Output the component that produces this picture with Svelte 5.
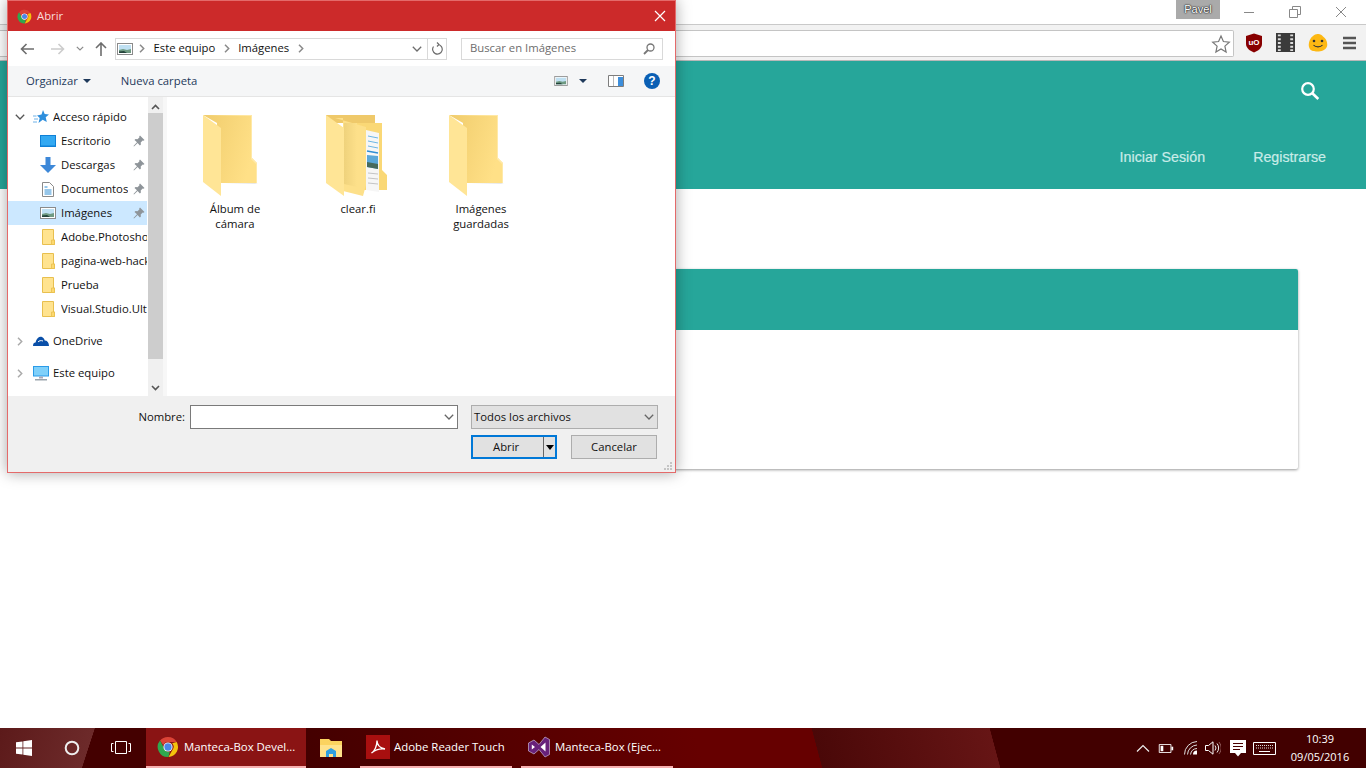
<script>
  const files = [
    { lines: ['Álbum de', 'cámara'], kind: 'plain' },
    { lines: ['clear.fi'], kind: 'docs' },
    { lines: ['Imágenes', 'guardadas'], kind: 'plain' }
  ];
  const pinned = [
    { name: 'Escritorio', icon: 'desktop' },
    { name: 'Descargas', icon: 'down' },
    { name: 'Documentos', icon: 'doc' },
    { name: 'Imágenes', icon: 'pic', selected: true }
  ];
  const folders = ['Adobe.Photoshop.CC', 'pagina-web-hackaton', 'Prueba', 'Visual.Studio.Ultimate'];
</script>

{#snippet chrome(size)}
  <svg width={size} height={size} viewBox="0 0 24 24">
    <path d="M12 1a11 11 0 0 1 9.5 5.5H12a5.5 5.5 0 0 0-5.2 3.700L3.300 5A11 11 0 0 1 12 1z" fill="#db4437" />
    <path d="M21.500 6.500A11 11 0 0 1 12.500 23l4.300-7.700A5.500 5.500 0 0 0 16.500 8z" fill="#f4c20d" />
    <path d="M12.500 23A11 11 0 0 1 3.300 5l4.400 8a5.500 5.500 0 0 0 6.300 3.900z" fill="#2fa84f" />
    <circle cx="12" cy="12" r="5" fill="#fff" />
    <circle cx="12" cy="12" r="4" fill="#4a86e8" />
  </svg>
{/snippet}

{#snippet pic(w, h)}
  <svg width={w} height={h} viewBox="0 0 16 12">
    <rect x=".5" y=".5" width="15" height="11" fill="#fff" stroke="#8a8a8a" />
    <rect x="2" y="2" width="12" height="8" fill="#bfe0f2" />
    <path d="M2 7l4-1 4 1 4-1v4H2z" fill="#6f9a82" />
    <path d="M2 8.500l5-.5 3 2H2z" fill="#24433a" />
  </svg>
{/snippet}

{#snippet smallFolder()}
  <svg class="mini" width="13" height="16" viewBox="0 0 13 16">
    <path d="M.5.500h11v10.500h1v4.500H.5z" fill="#ffe38f" stroke="#e8bf4e" />
    <path d="M9.500 11h3v4.500h-3z" fill="#fdd96f" stroke="#e8bf4e" stroke-width=".8" />
  </svg>
{/snippet}

{#snippet pinIcon()}
  <svg class="pin" width="12" height="12" viewBox="0 0 12 12">
    <path d="M7 .5l4.500 4.500-1 .8-.8-.3-2 2 .2 2-1 1-2.300-2.500L1 11.500l-.5-.5 3.500-3.700L1.500 5l1-1 2 .2 2-2-.3-.8z" fill="#8e9499" />
  </svg>
{/snippet}

{#snippet chevDown(c)}
  <svg width="10" height="6" viewBox="0 0 10 6"><path d="M.8.800L5 5l4.200-4.200" fill="none" stroke={c} stroke-width="1.300" /></svg>
{/snippet}

{#snippet chevRight(c)}
  <svg width="6" height="9" viewBox="0 0 6 9"><path d="M1 .8l3.700 3.700L1 8.200" fill="none" stroke={c} stroke-width="1.500" /></svg>
{/snippet}

{#snippet plainFolder()}
  <svg class="fplain" width="56" height="82" viewBox="0 0 56 82">
    <defs>
      <linearGradient id="fb" x1="0" y1="0" x2="1" y2=".35">
        <stop offset="0" stop-color="#f0cc6c" /><stop offset="1" stop-color="#ffe087" />
      </linearGradient>
    </defs>
    <path d="M52 68h3l-3 1H20z" fill="#e8e8e8" />
    <path d="M0 0h49v43l5 5v20H14V8z" fill="url(#fb)" />
    <path d="M49 0v43l5 5v20h-1V49l-5-5V1H3z" fill="#ffe9a8" />
    <path d="M0 0l18 13v68L0 67z" fill="#ffe596" />
  </svg>
{/snippet}

{#snippet docFolder()}
  <svg class="fdocs" width="62" height="82" viewBox="0 0 62 82">
    <defs>
      <linearGradient id="fband" x1="0" y1="0" x2="1" y2="0">
        <stop offset="0" stop-color="#efd27c" /><stop offset="1" stop-color="#fde08a" />
      </linearGradient>
    </defs>
    <path d="M0 0h49v8H0z" fill="#efc96a" />
    <path d="M20 8h36v47l5 5v15H20z" fill="#fad876" />
    <path d="M40 15l13 3v59l-13-2z" fill="#f6f6f6" />
    <path d="M42 21l10 2M42 26l10 2M42 31l10 2" stroke="#6eb6e4" />
    <path d="M41 36l11 2" stroke="#2f8ed4" stroke-width="1.500" />
    <path d="M41 40l11 1v13l-11-2z" fill="#5aa7d8" />
    <path d="M41 47l11 2v5l-11-2z" fill="#476a5c" />
    <path d="M42 58l10 1M42 63l10 1M42 68l10 1" stroke="#c4c4c4" />
    <path d="M9 3l31 9v58l-3 11-20-5V3z" fill="#fde08a" />
    <path d="M18 8h13v64l-13-3z" fill="url(#fband)" />
    <path d="M0 0l18 13v68L0 68z" fill="#ffe596" />
  </svg>
{/snippet}

<div class="screen">
  <div class="page">
    <div class="strip">
      <span class="user">Pavel</span>
      <div class="winctl">
        <svg width="12" height="12" viewBox="0 0 12 12"><path d="M1 6.500h10" stroke="#888" /></svg>
        <svg width="12" height="12" viewBox="0 0 12 12"><path d="M.5 3.500h8v8h-8zM3.500 3.500v-3h8v8h-3" fill="none" stroke="#888" /></svg>
        <svg width="12" height="12" viewBox="0 0 12 12"><path d="M1 1l10 10M11 1L1 11" stroke="#888" stroke-width="1" /></svg>
      </div>
    </div>
    <div class="toolbar">
      <div class="url">
        <svg width="20" height="20" viewBox="0 0 20 20"><path d="M10 2l2.400 5.500 5.900.6-4.400 4 1.200 5.900L10 15l-5.100 3 1.200-5.900-4.400-4 5.900-.6z" fill="#fff" stroke="#777" stroke-width="1.200" /></svg>
      </div>
      <div class="ext">
        <svg class="e1" width="18" height="20" viewBox="0 0 18 20"><path d="M9 .5l8 2.500v8c0 4-4 7-8 8.500-4-1.500-8-4.500-8-8.500V3z" fill="#800" /><text x="9" y="11.500" class="ub">uO</text></svg>
        <svg class="e2" width="19" height="19" viewBox="0 0 20 20"><rect width="20" height="20" fill="#3b3b3b" /><path d="M2 2.500h3M2 6.500h3M2 10.500h3M2 14.500h3M2 18h3M15 2.500h3M15 6.500h3M15 10.500h3M15 14.500h3M15 18h3" stroke="#ddd" stroke-width="2" /></svg>
        <svg class="e3" width="20" height="18" viewBox="0 0 20 18"><path d="M5 2c3-3 8-2.500 10 .5 3 2 5 6 4 10-1.500 4-6 5-9.500 5S2 17 1 13C0 9 2 4 5 2z" fill="#fdb813" /><circle cx="6" cy="7" r="1.300" fill="#333" /><circle cx="14" cy="7" r="1.300" fill="#333" /><path d="M5.500 11c2 2.500 7 2.500 9 0" fill="none" stroke="#333" stroke-width="1.200" /></svg>
        <svg class="e4" width="13" height="14" viewBox="0 0 14 14" preserveAspectRatio="none"><path d="M0 2h14M0 7h14M0 12h14" stroke="#555" stroke-width="2.600" /></svg>
      </div>
    </div>
    <header class="site">
      <svg class="search" width="20" height="20" viewBox="0 0 20 20"><circle cx="8" cy="8" r="5.800" fill="none" stroke="#fff" stroke-width="2.200" /><path d="M12.300 12.300l6 5.700" stroke="#fff" stroke-width="2.600" /></svg>
      <nav class="links"><span>Iniciar Sesión</span><span>Registrarse</span></nav>
    </header>
    <section class="card"><div class="cardhead"></div></section>
  </div>

  <div class="taskbar">
    <div class="tb-sys">
      <svg width="16" height="16" viewBox="0 0 16 16"><path d="M0 2.300l6.500-.9v6.200H0zM7.300 1.300L16 0v7.600H7.300zM0 8.400h6.500v6.200L0 13.700zM7.300 8.400H16V16l-8.700-1.200z" fill="#fff" /></svg>
    </div>
    <div class="tb-sys">
      <svg width="16" height="16" viewBox="0 0 16 16"><circle cx="8" cy="8" r="6.300" fill="none" stroke="#eee" stroke-width="2" /></svg>
    </div>
    <div class="tb-sys">
      <svg width="20" height="14" viewBox="0 0 20 14"><path d="M4.500.5h11v12h-11zM2.500 2.500H.5v8h2M17.500 2.500h2v8h-2" fill="none" stroke="#fff" /></svg>
    </div>
    <div class="app active">
      {@render chrome(22)}
      <span>Manteca-Box Devel...</span>
    </div>
    <div class="app folderapp">
      <svg width="22" height="18" viewBox="0 0 22 18"><path d="M0 0h9l2 2h11v16H0z" fill="#fbd35f" /><path d="M0 6h22v12H0z" fill="#ffe28a" /><path d="M6 18v-6l5-3 5 3v6h-3v-3H9v3z" fill="#2f9fe0" /></svg>
    </div>
    <div class="app running">
      <svg width="24" height="24" viewBox="0 0 24 24"><rect width="24" height="24" fill="#a80f0f" /><path d="M5.500 18c3-1.500 5.500-7 5.500-12.500 0 4 3 7.500 8 8.500-5-.5-9.500.5-13.500 4z" fill="none" stroke="#fff" stroke-width="1.300" /></svg>
      <span>Adobe Reader Touch</span>
    </div>
    <div class="app running vs">
      <svg width="24" height="24" viewBox="0 0 24 24"><path d="M1.500 8L7 5l5 4.500L18 2l4.500 2.500v15L18 22l-6-7.500L7 19l-5.500-3z" fill="#68217a" stroke="#c9b6d6" stroke-width=".7" /><path d="M4.800 9.500L8 12l-3.200 2.500zM13.500 12L18.500 7.500v9z" fill="#fff" /></svg>
      <span>Manteca-Box (Ejec...</span>
    </div>
    <div class="tray">
      <svg width="14" height="8" viewBox="0 0 14 8"><path d="M1 7.500L7 1.500l6 6" fill="none" stroke="#eee" stroke-width="1.200" /></svg>
      <svg width="16" height="9" viewBox="0 0 16 10"><path d="M.5.500h13v9H.5z" fill="none" stroke="#fff" /><path d="M2 2h3v6H2z" fill="#fff" /><path d="M14 3h2v4h-2z" fill="#fff" /></svg>
      <svg width="14" height="14" viewBox="0 0 14 14"><path d="M.5 13.500A13 13 0 0 1 13 .5M3.500 13.500A10 10 0 0 1 13 4M6.500 13.500A7 7 0 0 1 13 7.500" fill="none" stroke="#ddd" /><path d="M9 13.500a4 4 0 0 1 4-4v4z" fill="#fff" /></svg>
      <svg width="16" height="14" viewBox="0 0 16 14"><path d="M.5 4.500h3L8 .8v12.400L3.500 9.500h-3z" fill="none" stroke="#fff" /><path d="M10 4.500a4 4 0 0 1 0 5M12 2.500a7 7 0 0 1 0 9" fill="none" stroke="#eee" /><path d="M14 1a10 10 0 0 1 0 12" fill="none" stroke="#8f5a5a" /></svg>
      <svg width="16" height="17" viewBox="0 0 16 17"><path d="M0 0h16v13h-5l-3 3.500L5 13H0z" fill="#fff" /><path d="M3 3.500h10M3 6.500h10M3 9.500h7" stroke="#4a0000" /></svg>
      <svg width="23" height="13" viewBox="0 0 23 13"><path d="M.5.500h22v12H.5z" fill="none" stroke="#fff" /><path d="M3 3.500h17M3 6h17" stroke="#ddd" stroke-dasharray="1 1" /><path d="M6 9.500h11" stroke="#fff" /></svg>
      <div class="clock"><span>10:39</span><span>09/05/2016</span></div>
    </div>
  </div>

  <div class="dialog">
    <div class="titlebar">
      {@render chrome(15)}
      <span class="title">Abrir</span>
      <svg class="close" width="12" height="12" viewBox="0 0 12 12"><path d="M1 1l10 10M11 1L1 11" stroke="#fff" stroke-width="1.200" /></svg>
    </div>

    <div class="navbar">
      <div class="arrows">
        <svg width="14" height="12" viewBox="0 0 14 12"><path d="M6.500 1L1.500 6l5 5M1.500 6H14" fill="none" stroke="#6d6d6d" stroke-width="1.600" /></svg>
        <svg class="far" width="14" height="12" viewBox="0 0 14 12"><path d="M7.500 1l5 5-5 5M12.500 6H0" fill="none" stroke="#ccc" stroke-width="1.600" /></svg>
        <svg class="tiny" width="8" height="5" viewBox="0 0 8 5"><path d="M.8.800L4 4l3.200-3.200" fill="none" stroke="#8a8a8a" stroke-width="1.200" /></svg>
        <svg class="up" width="12" height="14" viewBox="0 0 12 14"><path d="M1 6l5-5 5 5M6 1v13" fill="none" stroke="#6d6d6d" stroke-width="1.600" /></svg>
      </div>
      <div class="address">
        <span class="addr-pic">{@render pic(16, 12)}</span>
        {@render chevRight('#8a8a8a')}
        <span class="t">Este equipo</span>
        {@render chevRight('#8a8a8a')}
        <span class="t">Imágenes</span>
        {@render chevRight('#8a8a8a')}
        <div class="addr-end">
          {@render chevDown('#6d6d6d')}
          <div class="refresh">
            <svg width="12" height="13" viewBox="0 0 12 13"><path d="M7 2.500A4.800 4.800 0 1 1 2.500 4.500M6 .5l2 2-2 2" fill="none" stroke="#6d6d6d" stroke-width="1.200" /></svg>
          </div>
        </div>
      </div>
      <div class="searchbox">
        <span class="t">Buscar en Imágenes</span>
        <svg width="12" height="12" viewBox="0 0 12 12"><circle cx="7.500" cy="4.500" r="3.500" fill="none" stroke="#777" stroke-width="1.300" /><path d="M5 7L1 11" stroke="#777" stroke-width="1.800" /></svg>
      </div>
    </div>

    <div class="cmdbar">
      <span class="t">Organizar</span>
      <i class="caret org"></i>
      <span class="t new">Nueva carpeta</span>
      <div class="cmd-right">
        {@render pic(14, 10)}
        <i class="caret"></i>
        <svg class="pane" width="16" height="12" viewBox="0 0 16 12"><path d="M.5.500h15v11H.5z" fill="#fff" stroke="#7d7d7d" /><path d="M5.500 1v10" stroke="#bbb" /><path d="M10 2h5v9h-5z" fill="#3d8edb" /></svg>
        <svg class="help" width="16" height="16" viewBox="0 0 16 16"><circle cx="8" cy="8" r="8" fill="#0a5fb4" /><text x="8" y="12.300" class="q">?</text></svg>
      </div>
    </div>

    <div class="body">
      <div class="tree">
        <div class="row top">
          <span class="exp">{@render chevDown('#555')}</span>
          <svg width="16" height="14" viewBox="0 0 16 14"><path d="M10 0l1.700 4 4.300.4-3.300 2.900 1.100 4.700L9.700 9.700 5.500 13l1.200-4.900L4 5.500l4.500-1z" fill="#2e8fdd" /><path d="M0 6h3.500M1 9h4M0 12h4" stroke="#6fb2e8" /></svg>
          <span class="label">Acceso rápido</span>
        </div>
        {#each pinned as item}
          <div class="row child" class:selected={item.selected}>
            {#if item.icon === 'desktop'}
              <svg width="16" height="12" viewBox="0 0 16 12"><rect width="16" height="12" fill="#0f80d6" /><rect x="1" y="1" width="14" height="9.500" fill="#33a9f2" /></svg>
            {:else if item.icon === 'down'}
              <svg width="16" height="16" viewBox="0 0 16 16"><path d="M5.500 0h5v8H16l-8 8-8-8h5.500z" fill="#3d88d8" /></svg>
            {:else if item.icon === 'doc'}
              <svg width="16" height="15" viewBox="-2 0 16 15"><path d="M.5.500h7l4 4v10H.5z" fill="#fff" stroke="#8a8a8a" /><path d="M2.500 5h3M2.500 8h7M2.500 10h7M2.500 12h7" stroke="#2f8ed4" /></svg>
            {:else}
              {@render pic(16, 12)}
            {/if}
            <span class="label">{item.name}</span>
            {@render pinIcon()}
          </div>
        {/each}
        {#each folders as name}
          <div class="row child folder">
            {@render smallFolder()}
            <span class="label">{name}</span>
          </div>
        {/each}
        <div class="row top gapped">
          <span class="exp">{@render chevRight('#aaa')}</span>
          <svg width="16" height="10" viewBox="0 0 16 10"><path d="M0 10c0-2.500 1-3.500 2.500-3.500C3.500 2 6.500 0 9 1c1.500.7 2.500 2 2.700 3.500 2.500 0 4.300 2 4.300 5.500z" fill="#0a4fa8" /><path d="M5 6c1-1.300 3-1.800 5-1" fill="none" stroke="#fff" /></svg>
          <span class="label">OneDrive</span>
        </div>
        <div class="row top gapped">
          <span class="exp">{@render chevRight('#aaa')}</span>
          <svg width="16" height="15" viewBox="0 0 16 15"><rect width="16" height="10.500" fill="#2a9be8" /><rect x="1" y="1" width="14" height="8.500" fill="#7fd0fa" /><path d="M6 10.500h4v2H6z" fill="#aab" /><path d="M2 13h12v1.500H2z" fill="#9aa4ad" /></svg>
          <span class="label">Este equipo</span>
        </div>
      </div>
      <div class="scroll">
        <svg class="sb-up" width="9" height="6" viewBox="0 0 9 6"><path d="M1 5l3.500-3.500L8 5" fill="none" stroke="#555" stroke-width="1.600" /></svg>
        <div class="thumb"></div>
        <svg class="sb-down" width="9" height="6" viewBox="0 0 9 6"><path d="M1 1l3.500 3.500L8 1" fill="none" stroke="#555" stroke-width="1.600" /></svg>
      </div>
      <div class="files">
        {#each files as file}
          <div class="file">
            {#if file.kind === 'docs'}
              {@render docFolder()}
            {:else}
              {@render plainFolder()}
            {/if}
            <div class="fname">
              {#each file.lines as line}<div>{line}</div>{/each}
            </div>
          </div>
        {/each}
      </div>
    </div>

    <div class="footer">
      <div class="frow">
        <span class="nlabel t">Nombre:</span>
        <div class="input">{@render chevDown('#666')}</div>
        <div class="select"><span class="t">Todos los archivos</span>{@render chevDown('#666')}</div>
      </div>
      <div class="frow btns">
        <div class="btn primary">
          <span class="t">Abrir</span>
          <i class="split"></i>
          <i class="blackcaret"></i>
        </div>
        <div class="btn"><span class="t">Cancelar</span></div>
      </div>
      <svg class="grip" width="10" height="10" viewBox="0 0 10 10"><path d="M7 1h2v2H7zM4 4h2v2H4zM7 4h2v2H7zM1 7h2v2H1zM4 7h2v2H4zM7 7h2v2H7z" fill="#c4c4c4" /></svg>
    </div>
  </div>
</div>

<style>
  :global(body) { margin: 0; background: #fff; }
  .screen {
    position: relative;
    width: 1366px;
    height: 768px;
    overflow: hidden;
    display: flex;
    flex-direction: column;
    font-family: "Open Sans", "Noto Sans", sans-serif;
    font-size: 11.3px;
    color: #111;
    background: #fff;
  }
  svg { display: block; flex: none; }
  .t { padding-bottom: 2px; }

  .page { flex: 1; min-height: 0; display: flex; flex-direction: column; }
  .strip { height: 24px; display: flex; justify-content: flex-end; align-items: flex-start; background: #fff; }
  .user {
    width: 44px; height: 19px; background: #aaa; color: #fff; text-align: center;
    font: 11px/18px "Liberation Sans", sans-serif; text-shadow: 0 0 2px #000, 0 0 1px #000; margin-right: 23px;
  }
  .winctl { display: flex; gap: 34px; padding: 6px 19px 0 0; }
  .toolbar {
    height: 35px; border-top: 1px solid #c9c9c9; border-bottom: 1px solid #b8b8b8;
    background: #f2f2f2; display: flex; align-items: center;
  }
  .url {
    flex: 1; height: 25px; background: #fff; border: 1px solid #c4c4c4; border-left: 0; border-radius: 0 2px 2px 0;
    display: flex; justify-content: flex-end; align-items: center; padding-right: 2px; margin-top: 2px;
  }
  .ext { display: flex; align-items: center; padding: 0 10px 0 11px; }
  .e2 { margin-left: 13px; }
  .e3 { margin-left: 13px; }
  .e4 { margin-left: 15px; }
  .ub { font: bold 8px "Liberation Sans", sans-serif; fill: #fff; text-anchor: middle; }
  .site {
    height: 128px; box-sizing: border-box; background: #26a69a; display: flex; flex-direction: column;
    align-items: flex-end; padding: 20px 40px 0 0;
  }
  .search { margin: 0 6px 0 0; }
  .links {
    display: flex; gap: 48px; margin-top: 46px; font: 14.25px/20px "Liberation Sans", sans-serif;
    color: #c9ece8; -webkit-text-stroke: .2px #c9ece8;
  }
  .card {
    margin: 80px 68px 0; height: 200px; background: #fff; border-radius: 2px;
    box-shadow: 0 1px 3px rgba(0,0,0,.4);
  }
  .cardhead { height: 61px; background: #26a69a; border-radius: 2px 2px 0 0; }

  .taskbar {
    height: 40px; flex: none; display: flex; align-items: stretch; color: #fff;
    background:
      linear-gradient(108deg, #5c1a1a 0, #6d2a2a 90px, transparent 90.5px),
      linear-gradient(75deg, #440000 300px, #660000 680px, #660000 794px, #4a0808 794.5px, #661515 966px, #420000 966.5px, #420000 100%);
    font-size: 11.4px;
  }
  .tb-sys { width: 48px; display: flex; align-items: center; justify-content: center; }
  .tb-sys:nth-child(3) { width: 50px; }
  .app { display: flex; align-items: center; gap: 4px; box-sizing: border-box; white-space: nowrap; }
  .app span { padding-bottom: 2px; }
  .app.active { width: 160px; gap: 5px; padding-left: 11px; background: #8a1414; border-bottom: 2px solid #f7b0b0; }
  .app.folderapp { width: 54px; padding-left: 14px; }
  .app.running { width: 152px; border-bottom: 2px solid #f7b0b0; padding-left: 6px; }
  .app.vs { margin-left: 9px; }
  .tray { margin-left: auto; display: flex; align-items: center; padding-right: 16px; }
  .tray svg:nth-child(1) { margin-right: 8px; }
  .tray svg:nth-child(2) { margin-right: 10px; }
  .tray svg:nth-child(3) { margin-right: 7px; }
  .tray svg:nth-child(4) { margin-right: 9px; }
  .tray svg:nth-child(5) { margin-right: 7px; }
  .clock { display: flex; flex-direction: column; align-items: center; line-height: 18px; margin-left: 14px; width: 60px; white-space: nowrap; font-size: 11px; }

  .dialog {
    position: absolute; left: 7px; top: 0; width: 667px; height: 471px;
    border: 1px solid #e46a6a; background: #fff; display: flex; flex-direction: column;
    box-shadow: 0 0 14px rgba(0,0,0,.35);
  }
  .titlebar {
    height: 30px; flex: none; background: #cc2a2a; display: flex; align-items: center; padding-left: 9px; color: #fff;
  }
  .title { margin-left: 5px; flex: 1; color: #f8dcdc; padding-bottom: 2px; }
  .close { margin-right: 9px; }

  .navbar { height: 35px; flex: none; display: flex; align-items: center; }
  .arrows { width: 107px; display: flex; align-items: center; padding-left: 12px; box-sizing: border-box; }
  .far { margin-left: 17px; }
  .tiny { margin-left: 11px; }
  .up { margin-left: 11px; }
  .address {
    width: 329px; height: 20px; border: 1px solid #d9d9d9; display: flex; align-items: center; gap: 8.5px; padding-left: 1px;
    color: #111;
  }
  .addr-pic { margin-right: -2.500px; }
  .addr-end { margin-left: auto; display: flex; align-items: center; gap: 5px; height: 100%; }
  .refresh { width: 18px; height: 100%; border-left: 1px solid #d9d9d9; display: flex; align-items: center; justify-content: center; }
  .searchbox {
    margin-left: 14px; width: 185px; height: 20px; border: 1px solid #d9d9d9; display: flex; align-items: center;
    justify-content: space-between; padding: 0 7px 0 8px; color: #6d6d6d;
  }

  .cmdbar {
    height: 30px; flex: none; background: #f5f6f7; border-bottom: 1px solid #e5e5e5;
    display: flex; align-items: center; padding-left: 18px; color: #1e395b;
  }
  .caret { width: 0; height: 0; border: 4px solid transparent; border-top: 4px solid #1e395b; border-bottom: 0; display: block; }
  .org { margin-left: 5px; }
  .new { margin-left: 30px; }
  .cmd-right { margin-left: auto; display: flex; align-items: center; padding-right: 15px; }
  .cmd-right .caret { margin-left: 11px; }
  .pane { margin-left: 21px; }
  .help { margin-left: 20px; }
  .q { font: bold 12px "Liberation Sans", sans-serif; fill: #fff; text-anchor: middle; }

  .body { height: 299px; flex: none; display: flex; background: #fff; }
  .tree { width: 140px; flex: none; overflow: hidden; padding-top: 8px; box-sizing: border-box; }
  .row { height: 24px; margin-right: 1px; display: flex; align-items: center; white-space: nowrap; overflow: hidden; }
  .row.child { padding-left: 32px; gap: 5px; }
  .row.folder { padding-left: 34px; gap: 6px; }
  .row.top { padding-left: 6px; }
  .row.gapped { margin-top: 8px; }
  .exp { width: 12px; margin-right: 7px; display: flex; justify-content: center; }
  .row.top .label { margin-left: 4px; }
  .row.selected { background: #cce8ff; }
  .label { flex: 1; overflow: hidden; padding-bottom: 2px; }
  .pin { margin-right: 2px; }
  .scroll { width: 15px; flex: none; background: #f0f0f0; display: flex; flex-direction: column; align-items: center; }
  .sb-up { margin: 7px 0 3px; }
  .thumb { width: 15px; height: 246px; background: #cdcdcd; }
  .sb-down { margin-top: 26px; }
  .files { flex: 1; margin-left: 4px; display: flex; gap: 33px; padding: 18px 0 0 23px; box-shadow: -4px 0 0 #f7f7f7; }
  .file { width: 90px; display: flex; flex-direction: column; align-items: center; }
  .fplain { margin-right: 9px; }
  .fdocs { margin-right: 3px; }
  .fname { text-align: center; line-height: 15px; margin-top: 4px; }

  .footer { flex: 1; background: #f0f0f0; position: relative; padding-top: 9px; box-sizing: border-box; }
  .frow { display: flex; align-items: center; height: 24px; }
  .nlabel { width: 177px; text-align: right; }
  .input {
    margin-left: 5px; width: 268px; height: 24px; box-sizing: border-box; background: #fff; border: 1px solid #7a7a7a;
    display: flex; align-items: center; justify-content: flex-end; padding-right: 3px;
  }
  .select {
    margin-left: 13px; width: 187px; height: 24px; box-sizing: border-box; background: #e1e1e1; border: 1px solid #adadad;
    display: flex; align-items: center; justify-content: space-between; padding: 0 3px 0 2px;
  }
  .btns { margin-top: 6px; padding-left: 463px; gap: 14px; }
  .btn {
    width: 86px; height: 24px; box-sizing: border-box; background: #e1e1e1; border: 1px solid #adadad;
    display: flex; align-items: center; justify-content: center;
  }
  .primary { border: 2px solid #0078d7; justify-content: flex-start; padding-left: 20px; }
  .split { width: 1px; height: 20px; background: #666; margin-left: auto; margin-right: 2px; display: block; }
  .blackcaret { width: 0; height: 0; border: 4px solid transparent; border-top: 5px solid #000; border-bottom: 0; display: block; margin-right: 1px; }
  .grip { position: absolute; right: 2px; bottom: 1px; }
</style>
